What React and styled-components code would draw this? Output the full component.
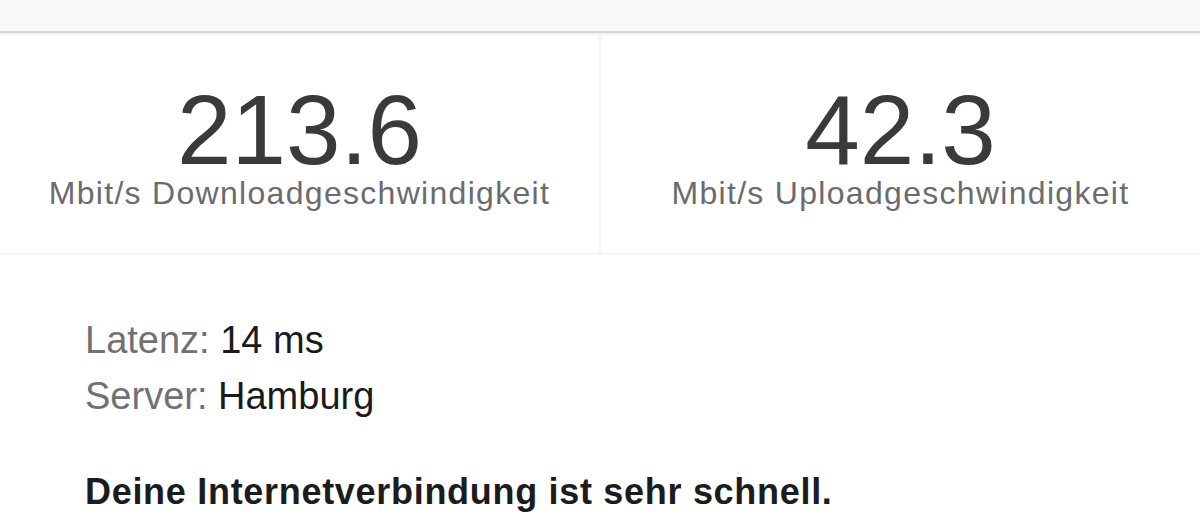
import React from 'react';
import styled, { createGlobalStyle } from 'styled-components';

const GlobalStyle = createGlobalStyle`
    html, body {
        margin: 0;
        padding: 0;
        background: #ffffff;
        font-family: "Liberation Sans", Arial, sans-serif;
    }
`;

const Page = styled.div`
    width: 1200px;
    height: 522px;
    overflow: hidden;
    background: #ffffff;
`;

const TopBar = styled.div`
    height: 31px;
    background: #f8f8f8;
    border-bottom: 2px solid #d6d6d6;
    box-shadow: 0 1px 3px rgba(0, 0, 0, 0.1);
`;

const Stats = styled.div`
    display: grid;
    grid-template-columns: 599px 601px;
    border-bottom: 1px solid #f0f0f0;
`;

const StatCell = styled.div`
    height: 220px;
    display: flex;
    flex-direction: column;
    align-items: center;
    border-left: ${({ divider }) => (divider ? '2px solid #f3f3f3' : 'none')};
`;

const Value = styled.div`
    font-size: 98px;
    line-height: 0.88;
    margin-top: 54px;
    color: #3a3a3c;
`;

const Unit = styled.div`
    font-size: 32px;
    line-height: 1;
    letter-spacing: 1.3px;
    color: #6b6b6d;
    margin-top: 4px;
`;

const Details = styled.div`
    padding: 58px 0 0 85px;
`;

const InfoRow = styled.div`
    font-size: 38px;
    line-height: 56px;
`;

const Label = styled.span`
    color: #717173;
`;

const Data = styled.span`
    color: #1a1a1c;
`;

const Verdict = styled.div`
    margin-top: 47px;
    font-size: 36px;
    font-weight: 700;
    letter-spacing: 0.7px;
    color: #1c1c1e;
`;

const stats = [
    { value: '213.6', unit: 'Mbit/s Downloadgeschwindigkeit' },
    { value: '42.3', unit: 'Mbit/s Uploadgeschwindigkeit' },
];

const info = [
    { label: 'Latenz:', data: '14 ms' },
    { label: 'Server:', data: 'Hamburg' },
];

export default function App() {
    return (
        <Page>
            <GlobalStyle />
            <TopBar />
            <Stats>
                {stats.map((s, i) => (
                    <StatCell key={i} divider={i > 0}>
                        <Value>{s.value}</Value>
                        <Unit>{s.unit}</Unit>
                    </StatCell>
                ))}
            </Stats>
            <Details>
                {info.map((row) => (
                    <InfoRow key={row.label}>
                        <Label>{row.label}</Label> <Data>{row.data}</Data>
                    </InfoRow>
                ))}
                <Verdict>Deine Internetverbindung ist sehr schnell.</Verdict>
            </Details>
        </Page>
    );
}
